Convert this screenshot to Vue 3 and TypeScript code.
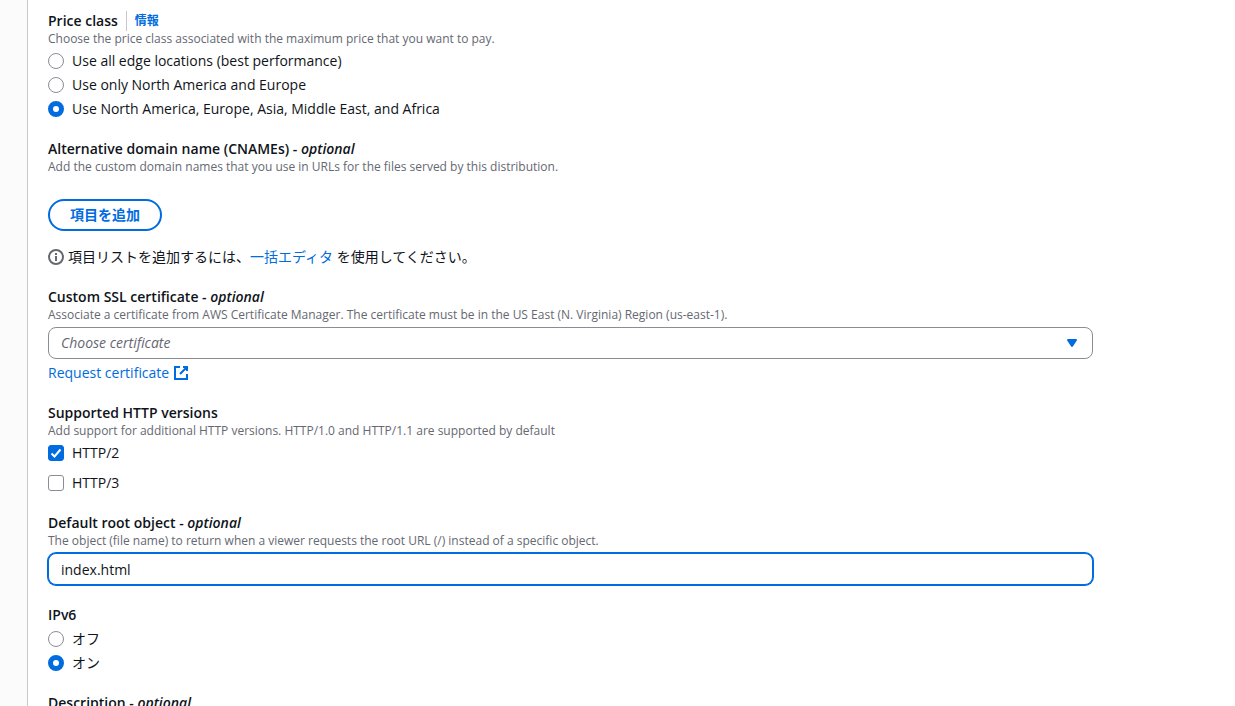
<script setup lang="ts">
import { ref } from 'vue'

const priceClasses: string[] = [
  'Use all edge locations (best performance)',
  'Use only North America and Europe',
  'Use North America, Europe, Asia, Middle East, and Africa',
]
const priceClass = ref<string>(priceClasses[2])
const certificate = ref<string>('')
const httpVersions: string[] = ['HTTP/2', 'HTTP/3']
const versions = ref<string[]>(['HTTP/2'])
const rootObject = ref<string>('index.html')
const ipv6Options: string[] = ['オフ', 'オン']
const ipv6 = ref<string>('オン')
</script>

<template>
  <div class="page">
    <div class="gutter"></div>
    <main class="form">
      <section class="field" role="radiogroup" aria-labelledby="price-label">
        <div class="label-row">
          <h3 id="price-label" class="label">Price class</h3>
          <a class="info-link" href="#info">情報</a>
        </div>
        <p class="hint">Choose the price class associated with the maximum price that you want to pay.</p>
        <div class="options">
          <label v-for="p in priceClasses" :key="p" class="option">
            <input v-model="priceClass" class="radio" type="radio" name="price" :value="p" />
            <span>{{ p }}</span>
          </label>
        </div>
      </section>

      <section class="field">
        <h3 class="label">Alternative domain name (CNAMEs) - <em>optional</em></h3>
        <p class="hint">Add the custom domain names that you use in URLs for the files served by this distribution.</p>
        <button class="add" type="button">項目を追加</button>
        <div class="note">
          <svg class="note-icon" viewBox="0 0 16 16" aria-hidden="true">
            <circle cx="8" cy="8" r="7" fill="none" stroke="currentColor" stroke-width="2" />
            <path d="M8 12V7M8 6V4" fill="none" stroke="currentColor" stroke-width="2" />
          </svg>
          <span>項目リストを追加するには、<a href="#bulk">一括エディタ</a> を使用してください。</span>
        </div>
      </section>

      <section class="field">
        <label class="label" for="certificate">Custom SSL certificate - <em>optional</em></label>
        <p class="hint">Associate a certificate from AWS Certificate Manager. The certificate must be in the US East (N. Virginia) Region (us-east-1).</p>
        <div class="select-wrap">
          <select id="certificate" v-model="certificate" class="control select">
            <option value="">Choose certificate</option>
          </select>
          <svg class="caret" viewBox="0 0 16 16" aria-hidden="true">
            <path d="M4 5h8l-4 6z" fill="currentColor" stroke="currentColor" stroke-width="2" stroke-linejoin="round" />
          </svg>
        </div>
        <a class="request" href="#request">
          <span>Request certificate</span>
          <svg class="external" viewBox="0 0 16 16" aria-hidden="true">
            <path d="M7 2H2v12h12V9M10 2h4v4M7 9l7-7" fill="none" stroke="currentColor" stroke-width="2" />
          </svg>
        </a>
      </section>

      <section class="field" role="group" aria-labelledby="http-label">
        <h3 id="http-label" class="label">Supported HTTP versions</h3>
        <p class="hint">Add support for additional HTTP versions. HTTP/1.0 and HTTP/1.1 are supported by default</p>
        <div class="options checks">
          <label v-for="v in httpVersions" :key="v" class="option">
            <span class="check-wrap">
              <input v-model="versions" class="check" type="checkbox" :value="v" />
              <svg v-if="versions.includes(v)" class="tick" viewBox="0 0 16 16" aria-hidden="true">
                <path d="M3.5 8.5l3 3 6-7" fill="none" stroke="currentColor" stroke-width="2" />
              </svg>
            </span>
            <span>{{ v }}</span>
          </label>
        </div>
      </section>

      <section class="field">
        <label class="label" for="root-object">Default root object - <em>optional</em></label>
        <p class="hint">The object (file name) to return when a viewer requests the root URL (/) instead of a specific object.</p>
        <input id="root-object" v-model="rootObject" class="control text active" type="text" />
      </section>

      <section class="field" role="radiogroup" aria-labelledby="ipv6-label">
        <h3 id="ipv6-label" class="label">IPv6</h3>
        <div class="options">
          <label v-for="o in ipv6Options" :key="o" class="option">
            <input v-model="ipv6" class="radio" type="radio" name="ipv6" :value="o" />
            <span>{{ o }}</span>
          </label>
        </div>
      </section>

      <section class="field">
        <h3 class="label">Description - <em>optional</em></h3>
      </section>
    </main>
  </div>
</template>

<style>
body {
  margin: 0;
  background: #ffffff;
}
</style>

<style scoped>
.page {
  display: flex;
  height: 100vh;
  overflow: hidden;
  color: #0f141a;
  font-family: "Open Sans", "Noto Sans CJK JP", sans-serif;
  font-size: 14px;
  line-height: 20px;
}
.gutter {
  flex: 0 0 27px;
  background: #fbfbfb;
}
.form {
  flex: 1;
  display: flex;
  flex-direction: column;
  gap: 20px;
  padding: 11px 142px 0 20px;
  border-left: 1px solid #c6c6cd;
}
.field {
  display: flex;
  flex-direction: column;
  flex-shrink: 0;
}
.label-row {
  display: flex;
  align-items: center;
}
.label {
  margin: 0;
  font-size: 14px;
  line-height: 20px;
  font-weight: 600;
}
.hint {
  margin: 0;
  color: #656871;
  font-size: 12px;
  line-height: 16px;
}
a {
  color: #006ce0;
  text-decoration: none;
}
.info-link {
  margin-left: 8px;
  padding-left: 8px;
  border-left: 1px solid #c6c6cd;
  font-size: 12px;
  font-weight: 700;
}
.options {
  display: flex;
  flex-direction: column;
  align-items: flex-start;
  gap: 4px;
  margin-top: 4px;
}
.checks {
  gap: 10px;
}
.option {
  display: flex;
  align-items: center;
  gap: 8px;
}
.radio,
.check {
  appearance: none;
  box-sizing: border-box;
  display: block;
  width: 16px;
  height: 16px;
  margin: 0;
  border: 1px solid #8c8c94;
  background: #ffffff;
}
.radio {
  border-radius: 50%;
}
.radio:checked {
  border: 5px solid #006ce0;
}
.check-wrap {
  position: relative;
}
.check {
  border-radius: 3px;
}
.check:checked {
  border-color: #006ce0;
  background: #006ce0;
}
.tick {
  position: absolute;
  inset: 0;
  color: #ffffff;
  pointer-events: none;
}
.add {
  align-self: flex-start;
  margin: 24px 0 16px;
  padding: 4px 20px;
  border: 2px solid #006ce0;
  border-radius: 20px;
  background: #ffffff;
  color: #006ce0;
  font: inherit;
  font-weight: 700;
  height: 32px;
}
.note {
  display: flex;
  align-items: center;
  gap: 4px;
}
.note-icon {
  width: 16px;
  height: 16px;
  color: #656871;
}
.control {
  box-sizing: border-box;
  width: 100%;
  height: 32px;
  padding: 4px 12px;
  border: 1px solid #8c8c94;
  border-radius: 8px;
  background: #ffffff;
  color: #0f141a;
  font: inherit;
  outline: none;
}
.select-wrap {
  position: relative;
  margin: 4px 0;
}
.select {
  display: block;
  appearance: none;
  color: #656871;
  font-style: italic;
}
.caret {
  position: absolute;
  top: 8px;
  right: 13px;
  width: 16px;
  height: 16px;
  color: #006ce0;
  pointer-events: none;
}
.request {
  display: flex;
  align-items: center;
  align-self: flex-start;
  gap: 4px;
}
.external {
  width: 16px;
  height: 16px;
}
.text {
  margin-top: 4px;
}
.active {
  border-color: #006ce0;
  box-shadow: 0 0 0 1px #006ce0;
}
</style>
